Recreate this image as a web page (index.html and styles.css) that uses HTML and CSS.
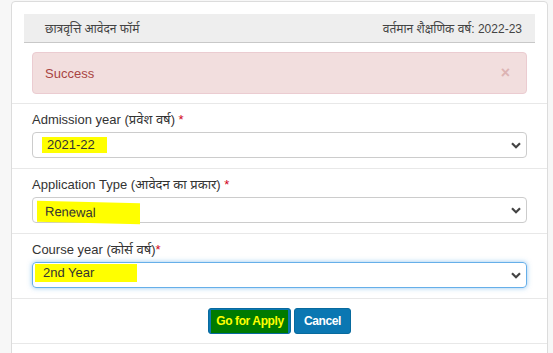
FILE: index.html
```html
<!DOCTYPE html>
<html lang="hi">
<head>
    <meta charset="UTF-8">
    <meta name="viewport" content="width=device-width, initial-scale=1.0">
    <title>छात्रवृत्ति आवेदन फॉर्म</title>
    <link rel="stylesheet" href="styles.css">
</head>
<body>
    <div class="card">
        <div class="top">
            <div class="heading">
                <span>छात्रवृत्ति आवेदन फॉर्म</span>
                <span>वर्तमान शैक्षणिक वर्ष: 2022-23</span>
            </div>
            <div class="alert">
                <span>Success</span>
                <span class="close">&times;</span>
            </div>
        </div>

        <div class="group">
            <label>Admission year (प्रवेश वर्ष) <b class="req">*</b></label>
            <div class="select">
                <span class="hl hl-year">2021-22</span>
                <svg class="chev" width="10" height="7" viewBox="0 0 10 7"><path d="M1 1.2 L5 5.2 L9 1.2" fill="none" stroke="#444" stroke-width="2.2"/></svg>
            </div>
        </div>

        <div class="group">
            <label>Application Type (आवेदन का प्रकार) <b class="req">*</b></label>
            <div class="select">
                <span class="hl hl-type">Renewal</span>
                <svg class="chev" width="10" height="7" viewBox="0 0 10 7"><path d="M1 1.2 L5 5.2 L9 1.2" fill="none" stroke="#444" stroke-width="2.2"/></svg>
            </div>
        </div>

        <div class="group">
            <label>Course year (कोर्स वर्ष)<b class="req">*</b></label>
            <div class="select focus">
                <span class="hl hl-course">2nd Year</span>
                <svg class="chev" width="10" height="7" viewBox="0 0 10 7"><path d="M1 1.2 L5 5.2 L9 1.2" fill="none" stroke="#444" stroke-width="2.2"/></svg>
            </div>
        </div>

        <div class="actions">
            <button class="btn btn-apply"><span class="hl-go">Go for Apply</span></button>
            <button class="btn btn-cancel">Cancel</button>
        </div>
        <div class="rest"></div>
    </div>
</body>
</html>
```

FILE: styles.css
```css
body{
    margin: 0;
    background-color: #f7f7f7;
    font-family: Arial, "Liberation Sans", "Noto Sans", sans-serif;
    font-size: 13px;
    color: #333;
}
.card{
    margin: 1px 5px 0 11px;
    background-color: #fff;
    border: 1px solid #dcdcdc;
    border-radius: 4px;
    height: 400px;
}
.top{
    padding: 12px 12px 9px;
    border-bottom: 1px solid #e8e8e8;
}
.heading{
    display: flex;
    justify-content: space-between;
    align-items: center;
    height: 28px;
    padding: 0 13px 0 21px;
    background-color: #eeeeee;
    border-bottom: 1px solid #c8c8c8;
    font-size: 12px;
    color: #444;
}
.alert{
    display: flex;
    justify-content: space-between;
    align-items: center;
    margin: 9px 8px 0;
    height: 40px;
    padding: 0 12px;
    background-color: #f2dede;
    border: 1px solid #ebccd1;
    border-radius: 4px;
    color: #a94442;
}
.close{
    font-weight: bold;
    font-size: 16px;
    color: #dcb3b3;
    margin-right: 4px;
}
.group{
    padding: 8px 20px 10px;
    border-bottom: 1px solid #e8e8e8;
}
.group label{
    display: block;
    line-height: 16px;
    margin-bottom: 4px;
}
.req{
    color: #d0021b;
    font-weight: normal;
}
.select{
    position: relative;
    display: flex;
    align-items: center;
    height: 24px;
    border: 1px solid #cccccc;
    border-radius: 4px;
    padding-left: 4px;
}
.select.focus{
    border-color: #66afe9;
    box-shadow: 0 0 5px rgba(102, 175, 233, 0.7);
}
.chev{
    position: absolute;
    right: 5px;
    top: 9px;
}
.hl{
    background-color: #ffff00;
    color: #333;
    line-height: 16px;
}
.hl-year{
    padding: 0 12px 0 5px;
    margin-left: 5px;
}
.hl-type{
    padding: 3px 44px 2px 8px;
    margin-top: 4px;
    transform: skewY(1.5deg);
}
.hl-course{
    padding: 1px 43px 1px 8px;
    margin-left: -2px;
    margin-top: -4px;
}
.actions{
    display: flex;
    justify-content: center;
    gap: 3px;
    padding: 9px 0;
    border-bottom: 1px solid #e8e8e8;
}
.btn{
    height: 26px;
    padding: 0;
    border: 1px solid #086a9e;
    border-radius: 3px;
    background-color: #0b77b2;
    color: #fff;
    font-family: Arial, "Liberation Sans", sans-serif;
    font-size: 12px;
    font-weight: bold;
    letter-spacing: -0.4px;
}
.btn-apply{
    width: 83px;
}
.btn-cancel{
    width: 57px;
}
.hl-go{
    background-color: #007a00;
    color: #ffff00;
    padding: 4px 4px 5px 5px;
}
```
